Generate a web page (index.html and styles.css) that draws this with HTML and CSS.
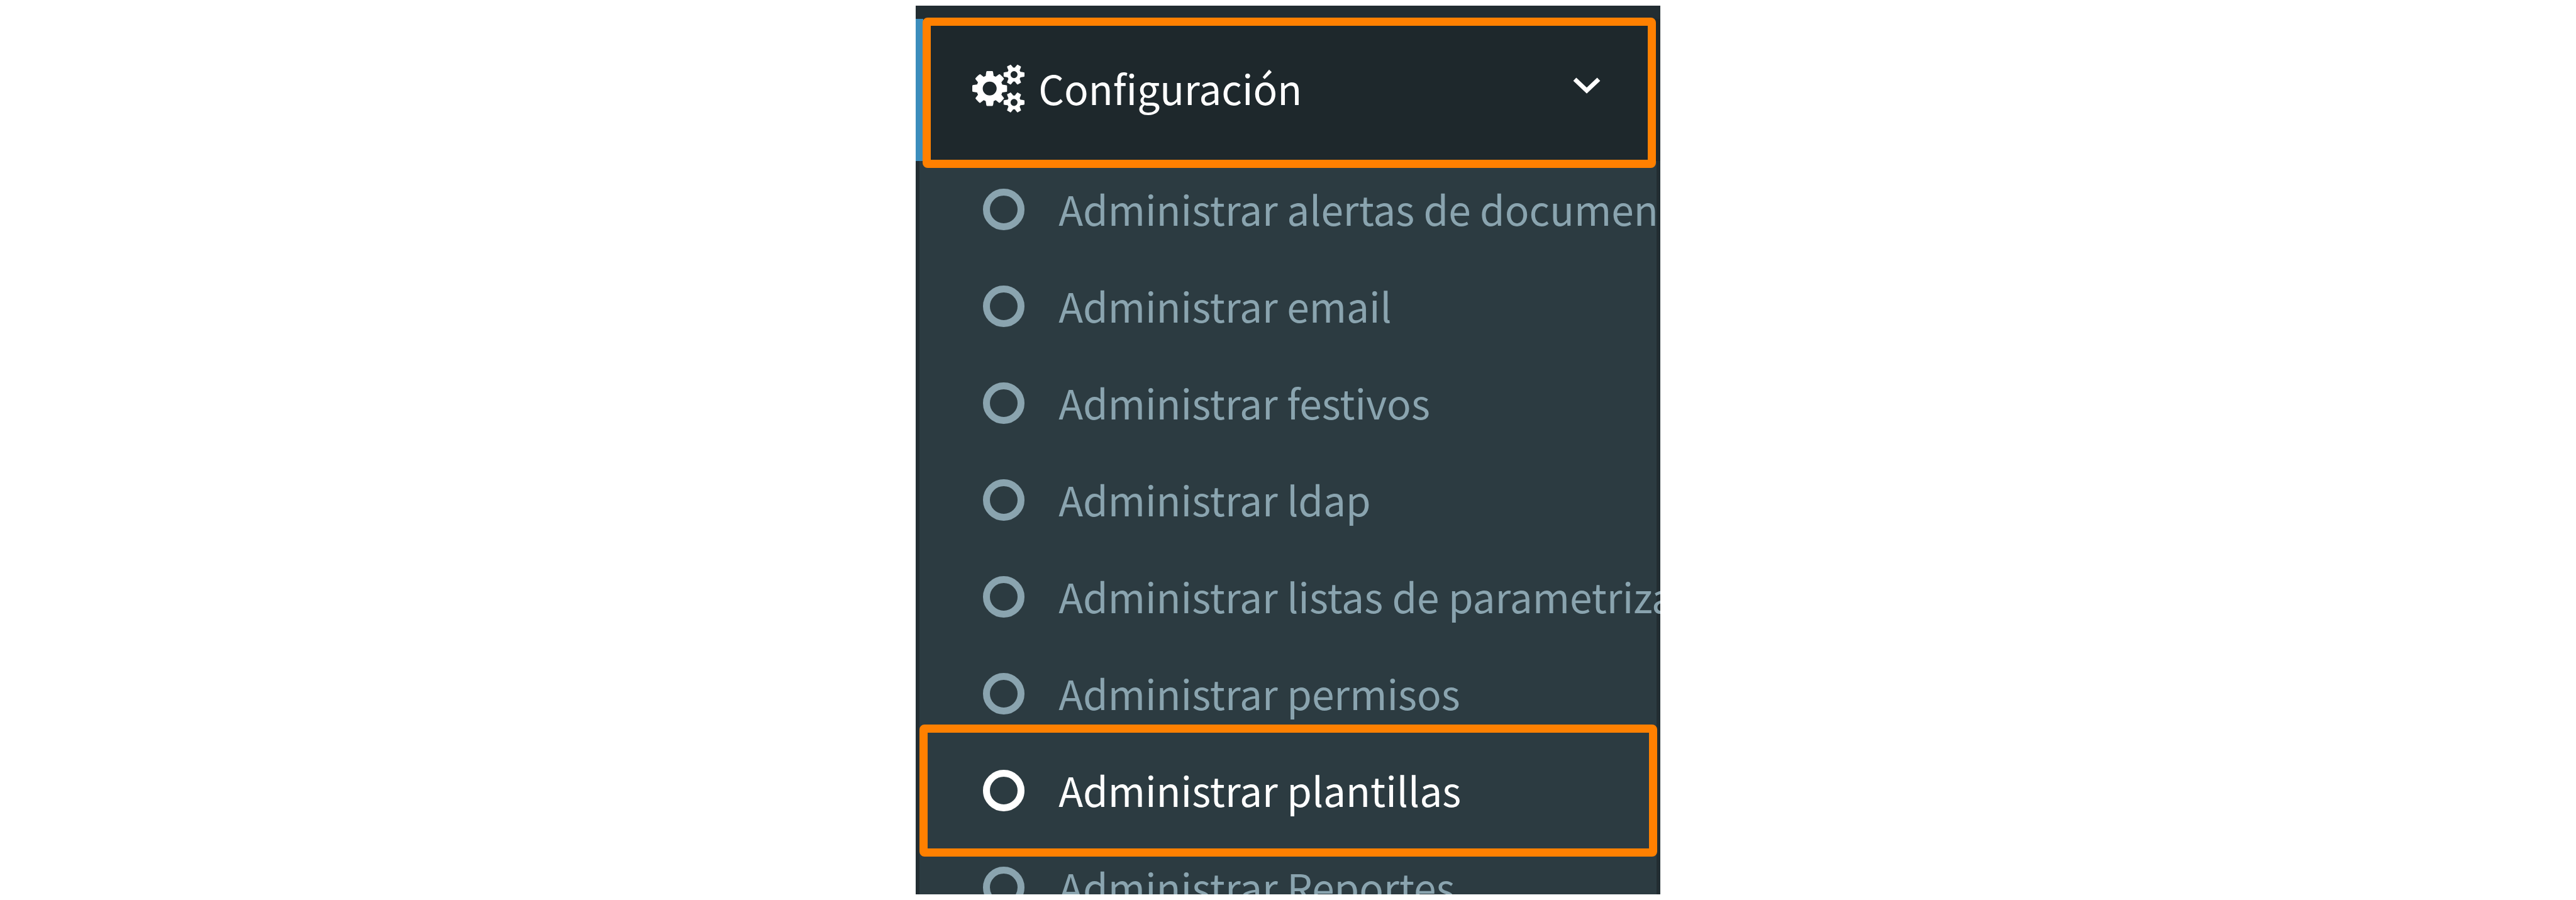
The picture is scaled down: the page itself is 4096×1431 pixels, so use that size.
FILE: index.html
```html
<!DOCTYPE html>
<html lang="es">

<head>
    <meta charset="UTF-8">
    <meta name="viewport" content="width=device-width, initial-scale=1.0">
    <title>Configuración</title>
    <link rel="stylesheet" href="styles.css">
</head>

<body>
    <nav class="sidebar">
        <a class="menu-header" href="#configuracion">
            <svg class="cogs" viewBox="0 0 1920 1792" aria-hidden="true">
                <path d="M896 896q0-106-75-181t-181-75-181 75-75 181 75 181 181 75 181-75 75-181zm768 512q0-52-38-90t-90-38-90 38-38 90q0 53 37.5 90.5t90.5 37.5 90.5-37.5 37.5-90.5zm0-1024q0-52-38-90t-90-38-90 38-38 90q0 53 37.5 90.5t90.5 37.5 90.5-37.5 37.5-90.5zm-384 421v185q0 10-7 19.5t-16 10.5l-155 24q-11 35-32 76 34 48 90 115 7 11 7 20 0 12-7 19-23 30-82.5 89.5t-78.5 59.5q-11 0-21-7l-115-90q-37 19-77 31-11 108-23 155-7 24-30 24h-186q-11 0-20-7.5t-10-17.5l-23-153q-34-10-75-31l-118 89q-7 7-20 7-11 0-21-8-144-133-144-160 0-9 7-19 10-14 41-53t47-61q-23-44-35-82l-152-24q-10-1-17-9.5t-7-19.5v-185q0-10 7-19.5t16-10.5l155-24q11-35 32-76-34-48-90-115-7-11-7-20 0-12 7-20 22-30 82-89t79-59q11 0 21 7l115 90q34-18 77-32 11-108 23-154 7-24 30-24h186q11 0 20 7.5t10 17.5l23 153q34 10 75 31l118-89q8-7 20-7 11 0 21 8 144 133 144 160 0 8-7 19-12 16-42 54t-45 60q23 48 34 82l152 23q10 2 17 10.5t7 19.5zm640 533v140q0 16-149 31-12 27-30 52 51 113 51 138 0 4-4 7-122 71-124 71-8 0-46-47t-52-68q-20 2-30 2t-30-2q-14 21-52 68t-46 47q-2 0-124-71-4-3-4-7 0-25 51-138-18-25-30-52-149-15-149-31v-140q0-16 149-31 13-29 30-52-51-113-51-138 0-4 4-7 4-2 35-20t59-34 30-16q8 0 46 46.5t52 67.5q20-2 30-2t30 2q51-71 92-112l6-2q4 0 124 70 4 3 4 7 0 25-51 138 17 23 30 52 149 15 149 31zm0-1024v140q0 16-149 31-12 27-30 52 51 113 51 138 0 4-4 7-122 71-124 71-8 0-46-47t-52-68q-20 2-30 2t-30-2q-14 21-52 68t-46 47q-2 0-124-71-4-3-4-7 0-25 51-138-18-25-30-52-149-15-149-31v-140q0-16 149-31 13-29 30-52-51-113-51-138 0-4 4-7 4-2 35-20t59-34 30-16q8 0 46 46.5t52 67.5q20-2 30-2t30 2q51-71 92-112l6-2q4 0 124 70 4 3 4 7 0 25-51 138 17 23 30 52 149 15 149 31z" />
            </svg>
            <span>Configuración</span>
            <svg class="arrow" viewBox="0 0 46 38" aria-hidden="true">
                <path d="M4 4l19 18 19-18" />
            </svg>
        </a>
        <ul class="submenu">
            <li><a href="#alertas"><i class="circle"></i><span>Administrar alertas de documen</span></a></li>
            <li><a href="#email"><i class="circle"></i><span>Administrar email</span></a></li>
            <li><a href="#festivos"><i class="circle"></i><span>Administrar festivos</span></a></li>
            <li><a href="#ldap"><i class="circle"></i><span>Administrar ldap</span></a></li>
            <li><a href="#listas"><i class="circle"></i><span>Administrar listas de parametriza</span></a></li>
            <li><a href="#permisos"><i class="circle"></i><span>Administrar permisos</span></a></li>
            <li class="active"><a href="#plantillas"><i class="circle"></i><span>Administrar plantillas</span></a></li>
            <li><a href="#reportes"><i class="circle"></i><span>Administrar Reportes</span></a></li>
        </ul>
    </nav>
</body>

</html>
```
FILE: styles.css
```css
* {
    box-sizing: border-box;
}

body {
    margin: 0;
    padding: 9px 0;
    background: #fff;
    font-family: "Noto Sans CJK SC", "Noto Sans", sans-serif;
    font-size: 64px;
}

.sidebar {
    width: 28.9%;
    height: calc(100vh - 18px);
    margin: 0 auto;
    padding-top: 21px;
    overflow: hidden;
    white-space: nowrap;
    background: #222d32;
}

.sidebar a {
    display: flex;
    align-items: center;
    text-decoration: none;
}

.sidebar span {
    padding-bottom: 4px;
}

.menu-header {
    position: relative;
    height: 226px;
    padding: 0 94px 4px 78px;
    border-left: 12px solid #3c8dbc;
    color: #fff;
    background: #1e282c;
}

/* orange marks around the steps to follow */
.menu-header::after,
.submenu .active::after {
    content: "";
    position: absolute;
    border: 13px solid #ff8000;
    border-radius: 8px;
    pointer-events: none;
}

.menu-header::after {
    inset: -2px 7px -11px -1px;
}

.cogs {
    width: 83px;
    margin-right: 22px;
    fill: #fff;
}

.arrow {
    width: 46px;
    margin-left: auto;
    fill: none;
    stroke: #fff;
    stroke-width: 7px;
}

.submenu {
    margin: 0;
    padding: 0;
    list-style: none;
    border: 0 solid #222d32;
    border-width: 0 6px;
    background: #2c3b41;
}

.submenu li {
    position: relative;
}

.submenu a {
    height: 154px;
    padding-left: 101px;
    color: #8aa4af;
}

.submenu .active a {
    color: #fff;
}

.submenu .active::after {
    inset: -28px -1px -28px 0;
}

.circle {
    flex: none;
    width: 66px;
    height: 66px;
    margin-right: 54px;
    border: 11px solid currentColor;
    border-radius: 50%;
}
```
